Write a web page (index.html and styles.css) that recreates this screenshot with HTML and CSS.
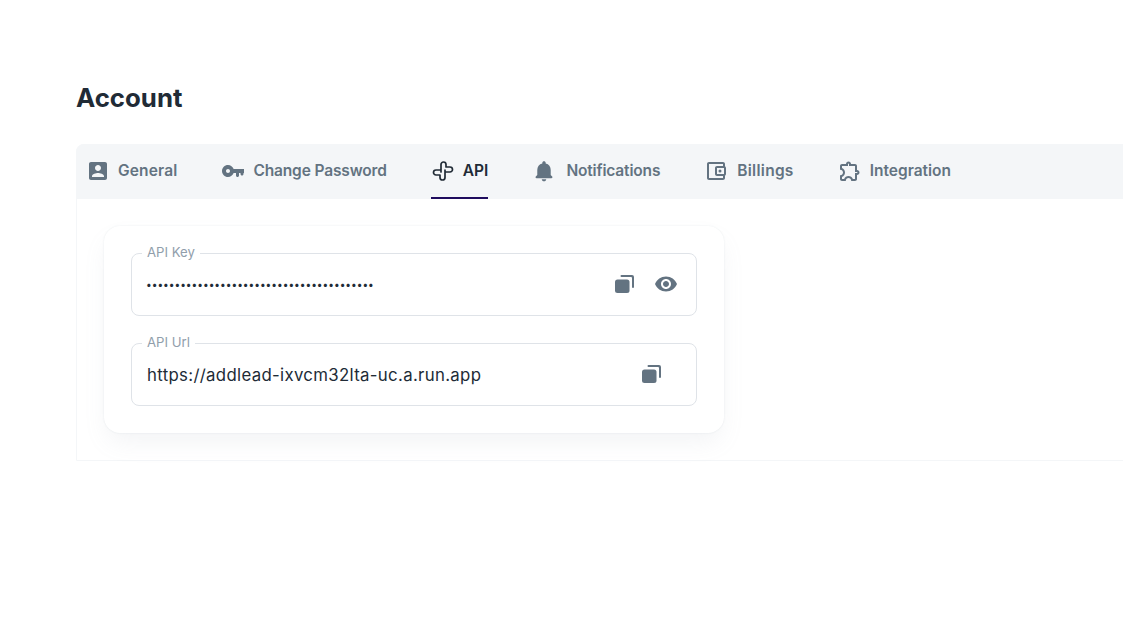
FILE: index.html
```html
<!DOCTYPE html>
<html lang="en">
<head>
<meta charset="utf-8">
<title>Account</title>
<link rel="stylesheet" href="styles.css">
</head>
<body>
<main class="page">
  <h1 class="title">Account</h1>
  <div class="panel">
    <nav class="tabs">
      <a class="tab tab-general"><svg class="icon" viewBox="0 0 24 24"><path d="M3 5v14c0 1.100.89 2 2 2h14c1.100 0 2-.9 2-2V5c0-1.100-.9-2-2-2H5c-1.110 0-2 .9-2 2zm12 4c0 1.660-1.340 3-3 3s-3-1.340-3-3 1.340-3 3-3 3 1.340 3 3zm-9 8c0-2 4-3.100 6-3.100s6 1.100 6 3.100v1H6v-1z"/></svg><span>General</span></a>
      <a class="tab tab-password"><svg class="icon" viewBox="0 0 24 24"><path d="M12.650 10C11.830 7.670 9.610 6 7 6c-3.310 0-6 2.690-6 6s2.690 6 6 6c2.610 0 4.830-1.670 5.650-4H15v2.500c0 .83.67 1.500 1.500 1.500s1.500-.67 1.500-1.500V14h1.500v1c0 .83.67 1.500 1.500 1.500s1.500-.67 1.500-1.500v-1h.5v-4H12.650zM7 14c-1.100 0-2-.9-2-2s.9-2 2-2 2 .9 2 2-.9 2-2 2z"/></svg><span>Change Password</span></a>
      <a class="tab active"><svg class="icon" viewBox="0 0 24 24"><path class="line" d="M10 13V5.500a2.500 2.500 0 0 1 5 0V8h4a2.500 2.500 0 0 1 0 5h-5M14 11v7.500a2.500 2.500 0 0 1-5 0V16H5a2.500 2.500 0 0 1 0-5h5"/></svg><span>API</span></a>
      <a class="tab tab-notifications"><svg class="icon" viewBox="0 0 24 24"><path transform="translate(-1.440 -.24) scale(1.120 1.020)" d="M12 22c1.100 0 2-.9 2-2h-4c0 1.100.9 2 2 2zm6-6v-5c0-3.070-1.630-5.640-4.500-6.320V4c0-.83-.67-1.500-1.500-1.500s-1.500.67-1.500 1.500v.68C7.640 5.360 6 7.920 6 11v5l-1.290 1.290c-.63.63-.19 1.710.7 1.710h13.170c.89 0 1.340-1.080.71-1.710L18 16z"/></svg><span>Notifications</span></a>
      <a class="tab tab-billings"><svg class="icon" viewBox="0 0 24 24"><path d="M21 7.280V5c0-1.100-.9-2-2-2H5c-1.110 0-2 .9-2 2v14c0 1.100.89 2 2 2h14c1.100 0 2-.9 2-2v-2.280c.59-.35 1-.98 1-1.720V9c0-.74-.41-1.370-1-1.720zM20 9v6h-7V9h7zM5 19V5h14v2h-6c-1.100 0-2 .9-2 2v6c0 1.100.9 2 2 2h6v2H5z"/><circle cx="16" cy="12" r="1.500"/></svg><span>Billings</span></a>
      <a class="tab tab-integration"><svg class="icon" viewBox="0 0 24 24"><path d="M10.500 4.500c.28 0 .5.22.5.5v2h6v6h2c.28 0 .5.22.5.5s-.22.5-.5.5h-2v6h-2.120c-.68-1.750-2.390-3-4.380-3s-3.700 1.250-4.380 3H4v-2.120c1.750-.68 3-2.390 3-4.380 0-1.990-1.240-3.700-2.990-4.380L4 7h6V5c0-.28.22-.5.5-.5m0-2C9.120 2.500 8 3.620 8 5H4c-1.100 0-1.990.9-1.990 2v3.800h.29c1.490 0 2.700 1.210 2.700 2.700s-1.210 2.700-2.700 2.700H2V20c0 1.100.9 2 2 2h3.800v-.3c0-1.490 1.210-2.700 2.700-2.700s2.700 1.210 2.700 2.700v.3H17c1.100 0 2-.9 2-2v-4c1.380 0 2.500-1.120 2.500-2.500S20.380 11 19 11V7c0-1.100-.9-2-2-2h-4c0-1.380-1.120-2.500-2.500-2.500z"/></svg><span>Integration</span></a>
    </nav>
    <div class="content">
      <section class="card">
        <div class="field">
          <label class="legend">API Key</label>
          <span class="value dots">••••••••••••••••••••••••••••••••••••••••</span>
          <span class="actions">
            <svg class="icon" viewBox="0 0 24 24"><path d="M9.500 3H20a2 2 0 0 1 2 2v10a1 1 0 0 1-2 0V6a1 1 0 0 0-1-1H9.500a1 1 0 0 1 0-2z"/><rect x="3" y="7.500" width="14.500" height="13.500" rx="2.500"/></svg>
            <svg class="icon" viewBox="0 0 24 24"><path d="M12 4.500C7 4.500 2.730 7.610 1 12c1.730 4.390 6 7.500 11 7.500s9.270-3.110 11-7.500c-1.730-4.390-6-7.500-11-7.500zM12 17c-2.760 0-5-2.240-5-5s2.240-5 5-5 5 2.240 5 5-2.240 5-5 5zm0-8c-1.660 0-3 1.340-3 3s1.340 3 3 3 3-1.340 3-3-1.340-3-3-3z"/></svg>
          </span>
        </div>
        <div class="field">
          <label class="legend">API Url</label>
          <span class="value">https://addlead-ixvcm32lta-uc.a.run.app</span>
          <span class="actions single">
            <svg class="icon" viewBox="0 0 24 24"><path d="M9.500 3H20a2 2 0 0 1 2 2v10a1 1 0 0 1-2 0V6a1 1 0 0 0-1-1H9.500a1 1 0 0 1 0-2z"/><rect x="3" y="7.500" width="14.500" height="13.500" rx="2.500"/></svg>
          </span>
        </div>
      </section>
    </div>
  </div>
</main>
</body>
</html>
```

FILE: styles.css
```css
* { box-sizing: border-box; }
html, body { margin: 0; height: 100%; overflow: hidden; background: #fff; }
body { font-family: Inter, "Liberation Sans", sans-serif; color: #212b36; }
.page { padding: 80px 0 0 76px; width: 1160px; }
.title { margin: 0 0 29px; font-size: 25.800px; line-height: 35px; font-weight: 700; color: #212b36; }
.panel { border: 1px solid #f4f6f8; border-radius: 8px 0 0 0; height: 317px; }
.tabs { display: flex; gap: 44px; height: 55px; padding-left: 10px; background: #f4f6f8; margin: -1px 0 0 -1px; border-radius: 8px 0 0 0; }
.tab { display: flex; align-items: center; gap: 8px; height: 55px; color: #637381; font-size: 15.500px; font-weight: 600; border-bottom: 2px solid transparent; }
.tab.active { color: #212b36; border-bottom-color: #1f0c5e; }
.tab-general { letter-spacing: .14px; }
.tab-password { letter-spacing: -.14px; }
.tab-notifications { letter-spacing: -.16px; gap: 10px; }
.tab-billings { gap: 9px; letter-spacing: .28px; }
.tab-integration { letter-spacing: 0; }
.icon { width: 24px; height: 24px; fill: currentColor; flex: none; }
.line { fill: none; stroke: currentColor; stroke-width: 1.700; stroke-linecap: round; stroke-linejoin: round; }
.content { padding: 27px; }
.card { width: 620px; border-radius: 16px; background: #fff; padding: 27px; box-shadow: 0 0 2px rgba(145,158,171,.2), 0 12px 24px -4px rgba(145,158,171,.12); display: flex; flex-direction: column; gap: 27px; }
.field { position: relative; height: 63px; padding: 0 18px 0 15px; border: 1px solid #dfe3e8; border-radius: 8px; display: flex; align-items: center; justify-content: space-between; }
.legend { position: absolute; top: -10px; left: 10px; padding: 0 5px; font-size: 13.200px; line-height: 16px; color: #919eab; background: #fff; }
.value { font-size: 16.800px; letter-spacing: .32px; color: #212b36; }
.dots { font-size: 10.150px; letter-spacing: 0; margin: 0 0 2px -1px; }
.actions { display: flex; gap: 18px; color: #637381; margin-bottom: 1px; }
.actions.single { margin-right: 15px; }
```
